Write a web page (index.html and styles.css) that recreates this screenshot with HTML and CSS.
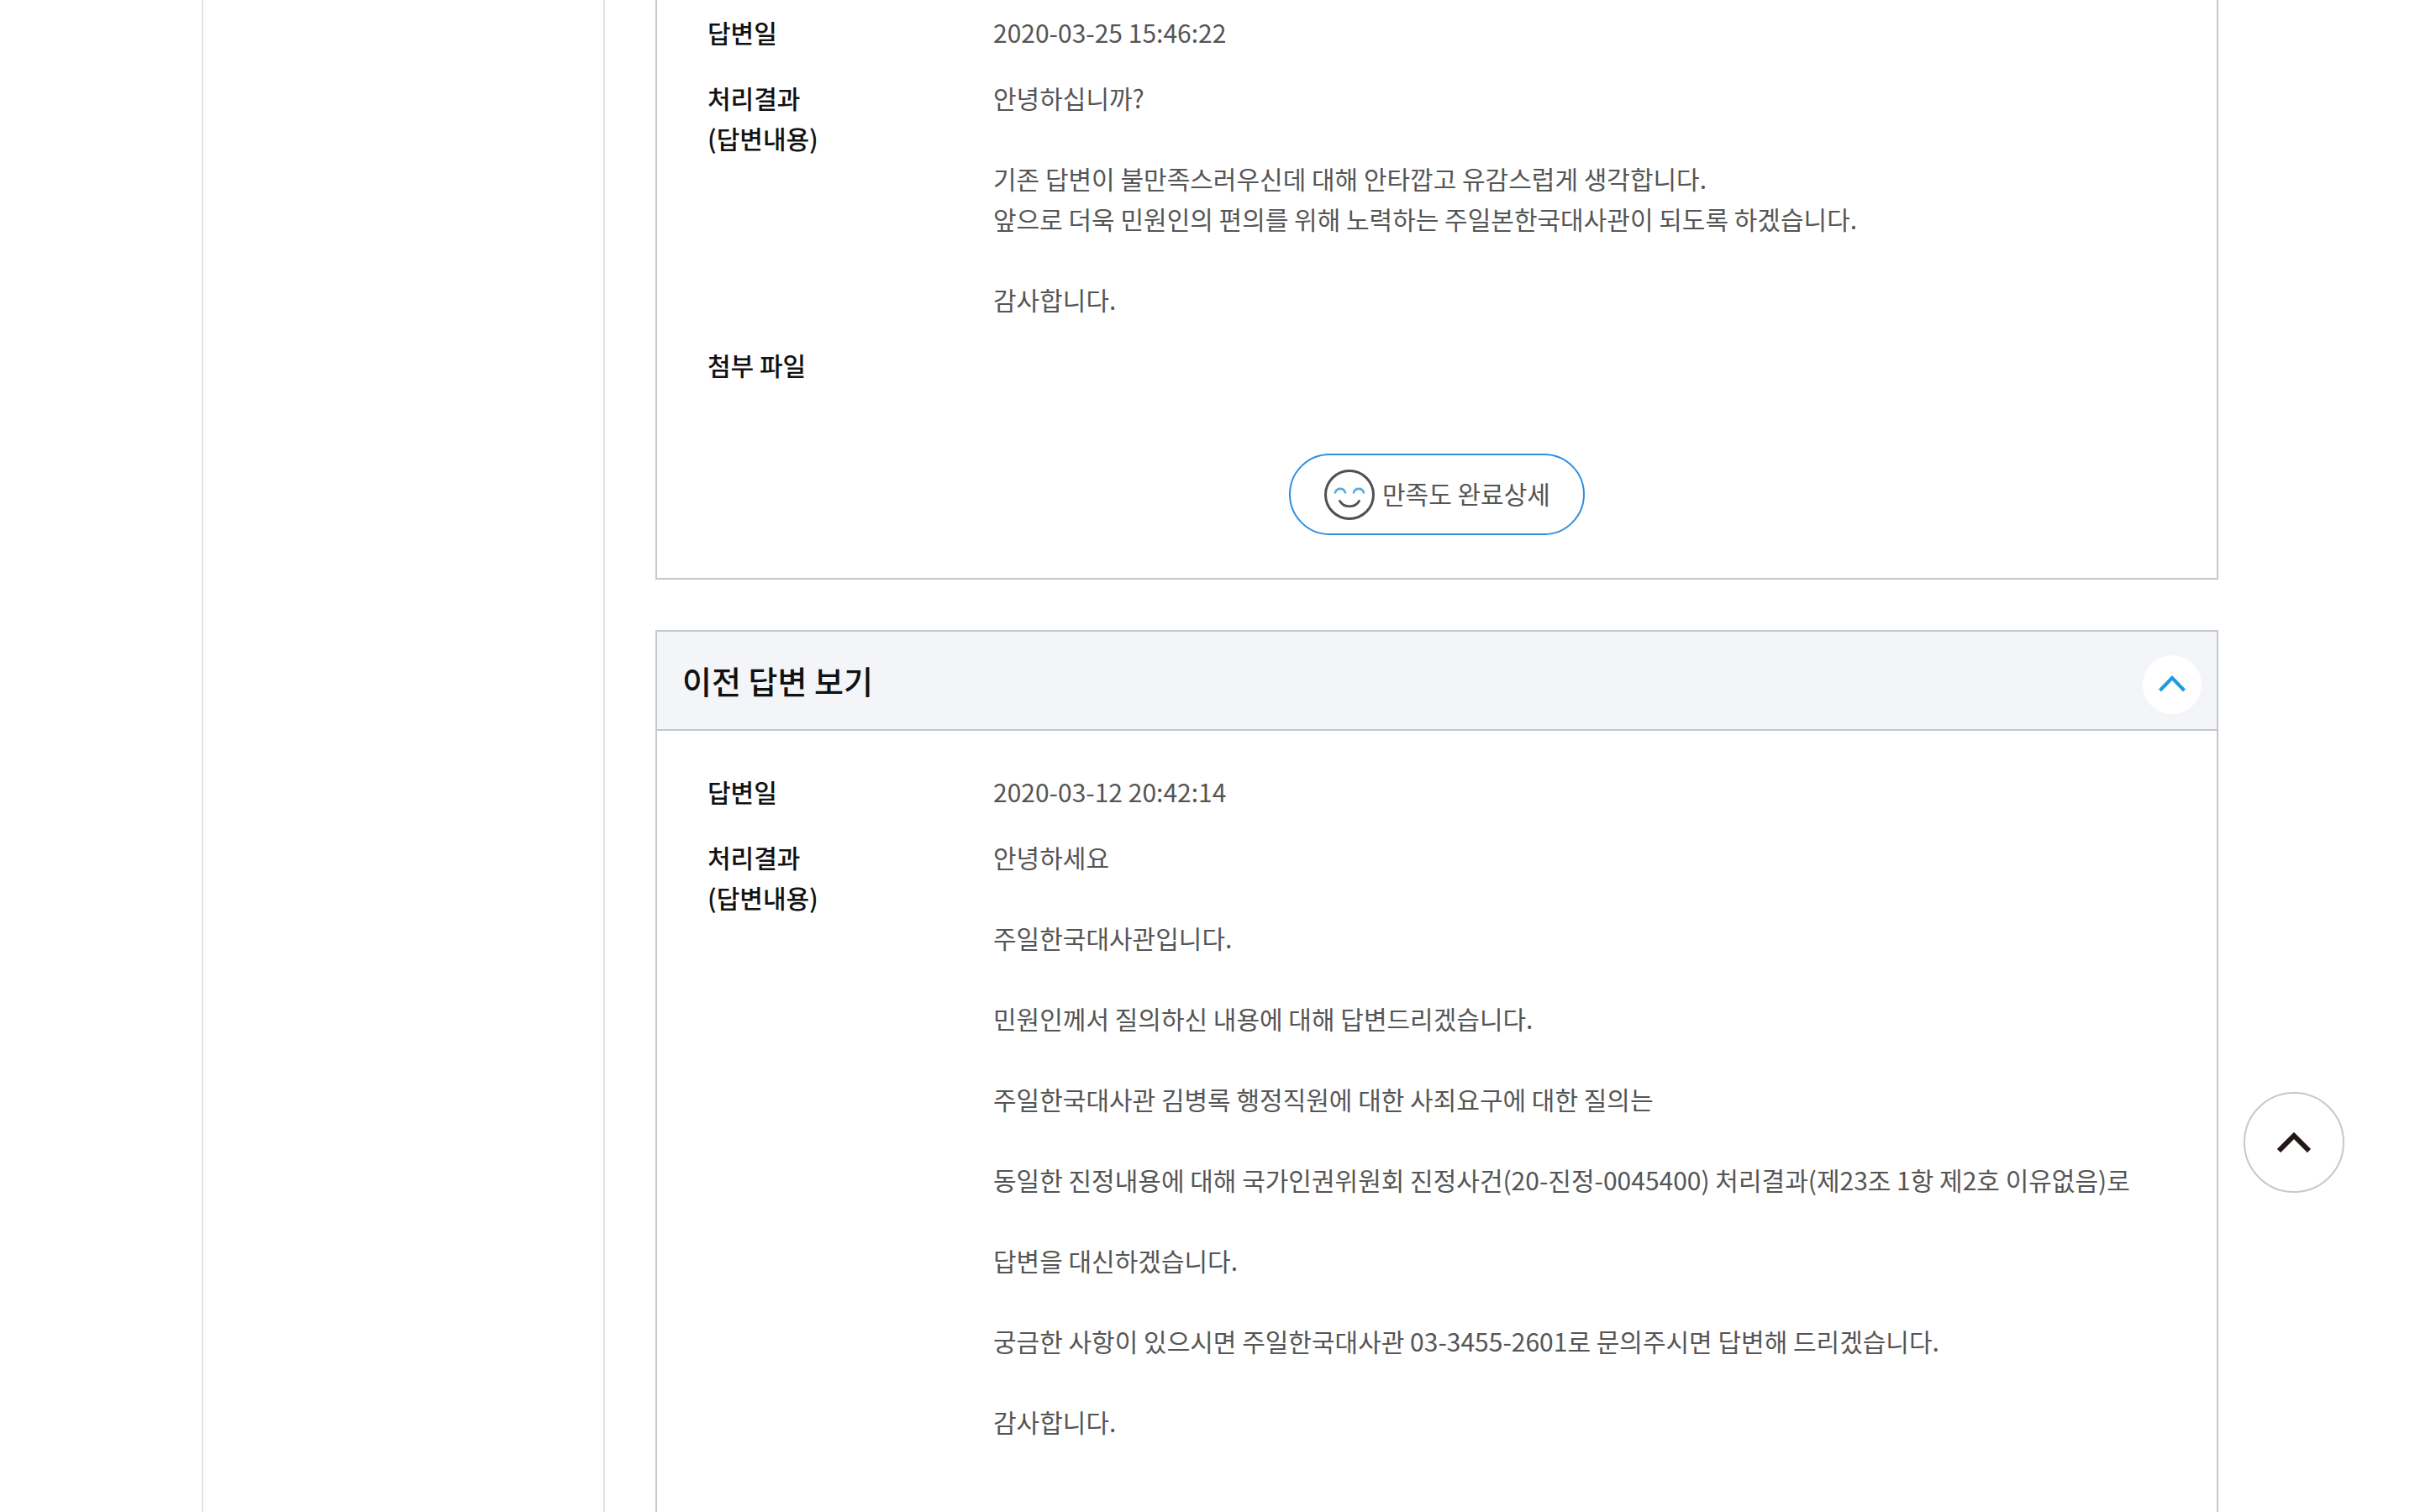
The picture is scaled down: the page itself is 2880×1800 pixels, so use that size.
FILE: index.html
```html
<!DOCTYPE html>
<html lang="ko">
<head>
<meta charset="utf-8">
<title>답변 상세</title>
<link rel="stylesheet" href="styles.css">
</head>
<body>
<div class="page">
  <aside class="side"></aside>
  <main class="main">
    <section class="box box-first">
      <dl class="rows">
        <div class="row"><dt>답변일</dt><dd>2020-03-25 15:46:22</dd></div>
        <div class="row"><dt>처리결과<br>(답변내용)</dt><dd>안녕하십니까?<br><br>기존 답변이 불만족스러우신데 대해 안타깝고 유감스럽게 생각합니다.<br>앞으로 더욱 민원인의 편의를 위해 노력하는 주일본한국대사관이 되도록 하겠습니다.<br><br>감사합니다.</dd></div>
        <div class="row"><dt>첨부 파일</dt><dd></dd></div>
      </dl>
      <div class="actions">
        <a class="satisfy">
          <svg class="smile" viewBox="0 0 60 60" aria-hidden="true">
            <circle cx="30" cy="30" r="28.5" fill="#fff" stroke="#505052" stroke-width="3"/>
            <path d="M13 27.500a6.200 6.200 0 0 1 12 0M35 27.500a6.200 6.200 0 0 1 12 0" fill="none" stroke="#5fa9dc" stroke-width="2.600" stroke-linecap="round"/>
            <path d="M18.500 37.500c5 8.500 18 8.500 23 0" fill="none" stroke="#505052" stroke-width="2.800" stroke-linecap="round"/>
          </svg>
          <span>만족도 완료상세</span>
        </a>
      </div>
    </section>
    <section class="box box-prev">
      <header class="prev-head">
        <h2>이전 답변 보기</h2>
        <span class="toggle">
          <svg viewBox="0 0 32 20" aria-hidden="true"><path d="M1.500 18L16 3l14.500 15" fill="none" stroke="#1e9be0" stroke-width="4"/></svg>
        </span>
      </header>
      <dl class="rows">
        <div class="row"><dt>답변일</dt><dd>2020-03-12 20:42:14</dd></div>
        <div class="row"><dt>처리결과<br>(답변내용)</dt><dd>안녕하세요<br><br>주일한국대사관입니다.<br><br>민원인께서 질의하신 내용에 대해 답변드리겠습니다.<br><br>주일한국대사관 김병록 행정직원에 대한 사죄요구에 대한 질의는<br><br>동일한 진정내용에 대해 국가인권위원회 진정사건(20-진정-0045400) 처리결과(제23조 1항 제2호 이유없음)로<br><br>답변을 대신하겠습니다.<br><br>궁금한 사항이 있으시면 주일한국대사관 03-3455-2601로 문의주시면 답변해 드리겠습니다.<br><br>감사합니다.</dd></div>
      </dl>
    </section>
  </main>
  <a class="to-top">
    <svg viewBox="0 0 40 24" aria-hidden="true"><path d="M2 22L20 4l18 18" fill="none" stroke="#231815" stroke-width="6"/></svg>
  </a>
</div>
</body>
</html>
```
FILE: styles.css
```css
* { box-sizing: border-box; }
html, body { margin: 0; padding: 0; background: #fff; }
body {
  font-family: "Noto Sans CJK KR", "Noto Sans", sans-serif;
  color: #555;
  overflow: hidden;
  font-variant-ligatures: none;
  font-feature-settings: "calt" 0, "kern" 0, "liga" 0, "clig" 0, "ccmp" 0, "locl" 0;
}
.page {
  position: relative;
  display: flex;
  gap: 60px;
  height: 1800px;
  padding-left: 240px;
  overflow: hidden;
}
.side {
  flex: none;
  width: 480px;
  border-left: 2px solid #e2e2e2;
  border-right: 2px solid #e2e2e2;
}
.main { flex: none; width: 1860px; }
.box { border: 2px solid #c3c8cd; }
.box-first { border-top: 0; padding-top: 14px; height: 690px; }
.box-prev { margin-top: 60px; min-height: 1200px; }
.rows { margin: 0; padding: 0 0 0 60px; }
.row { display: flex; margin-bottom: 30px; line-height: 48px; font-size: 30px; }
.row dt { flex: none; width: 340px; color: #111; font-weight: 500; }
.row dd { margin: 0; font-weight: 400; white-space: nowrap; }
.actions { display: flex; justify-content: center; margin-top: 82px; }
.satisfy {
  display: flex;
  align-items: center;
  gap: 9px;
  width: 352px;
  height: 97px;
  padding: 0 0 4px 40px;
  border: 2px solid #2f8ee0;
  border-radius: 49px;
  font-size: 30px;
}
.smile { width: 60px; height: 60px; flex: none; margin-top: 4px; }
.prev-head {
  display: flex;
  align-items: center;
  justify-content: space-between;
  height: 118px;
  padding: 0 18px 0 30px;
  background: #f4f5f9;
  border-bottom: 2px solid #c3c8cd;
  margin-bottom: 48px;
}
.prev-head h2 { margin: 0 0 2px; font-size: 38px; font-weight: 500; color: #111; }
.toggle {
  display: flex;
  align-items: center;
  justify-content: center;
  width: 70px;
  height: 70px;
  margin-top: 9px;
  border-radius: 50%;
  background: #fff;
}
.toggle svg { width: 32px; height: 20px; margin-bottom: 2px; }
.to-top {
  position: absolute;
  left: 2670px;
  top: 1300px;
  display: flex;
  align-items: center;
  justify-content: center;
  width: 120px;
  height: 120px;
  border: 2px solid #c8c8c8;
  border-radius: 50%;
  background: #fff;
}
.to-top svg { width: 40px; height: 24px; }
```
